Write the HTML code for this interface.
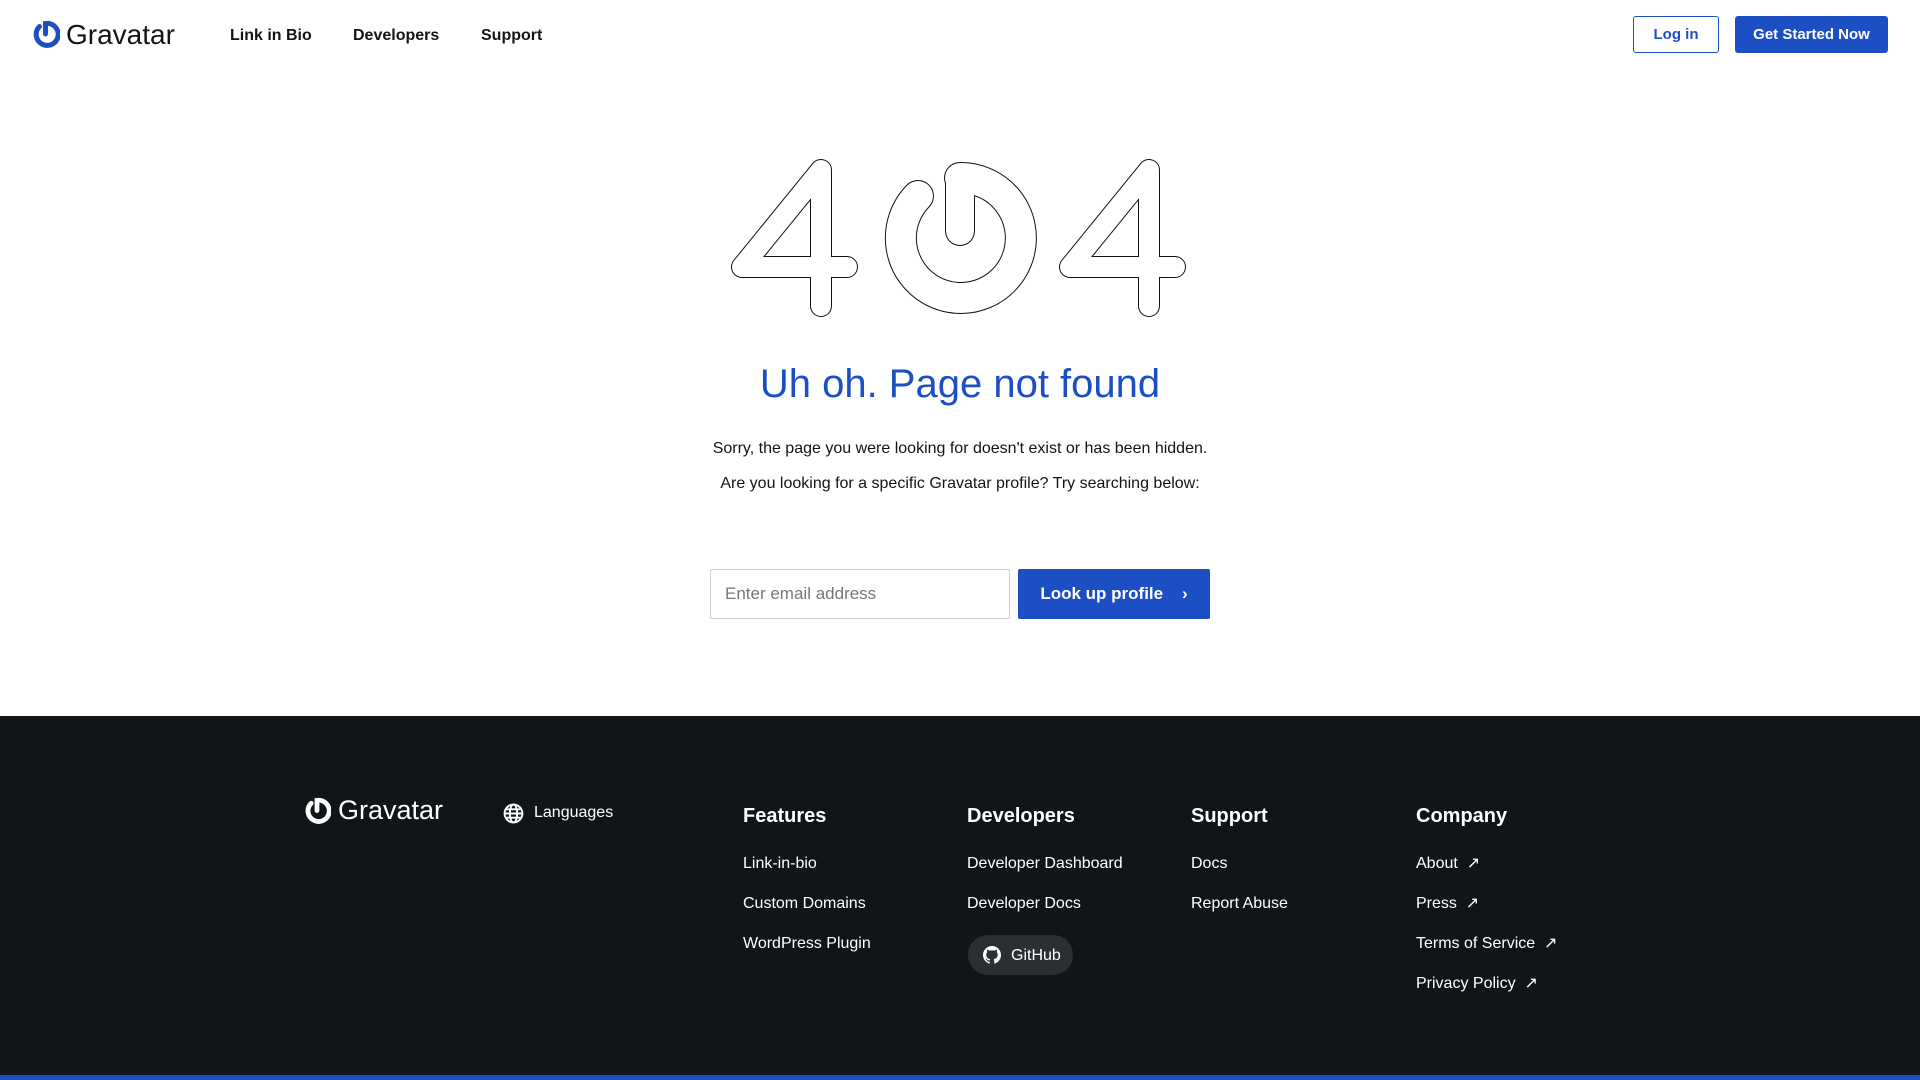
<!DOCTYPE html>
<html><head><meta charset="utf-8"><style>
*{margin:0;padding:0;box-sizing:border-box}
body{width:1920px;height:1080px;overflow:hidden;background:#fff;font-family:"Liberation Sans",Arial,sans-serif;color:#101517;position:relative}
.abs{position:absolute}
.nav{font-weight:bold;font-size:16px;top:27px}
.btn{position:absolute;top:16px;height:37px;border-radius:3px;font-size:15px;font-weight:bold;display:flex;align-items:center;justify-content:center}
footer{position:absolute;left:0;top:716px;width:1920px;height:364px;background:#101517;color:#fff}
footer .h{position:absolute;top:88px;font-size:20px;font-weight:bold}
footer .l{position:absolute;font-size:16px}
.bar{position:absolute;left:0;bottom:0;width:1920px;height:5px;background:#1d4fc4}
</style></head><body>
<svg class="abs" style="left:31px;top:20px" width="29" height="29" viewBox="0 0 29 29"><path d="M8.5 6.5 A11 11 0 1 0 14.5 3.5 V14" fill="none" stroke="#1d4fc4" stroke-width="5" stroke-linecap="round"/></svg>
<div class="abs" style="left:66px;top:19px;font-size:28px;color:#101517">Gravatar</div>
<div class="abs nav" style="left:230px">Link in Bio</div>
<div class="abs nav" style="left:353px">Developers</div>
<div class="abs nav" style="left:481px">Support</div>
<div class="btn" style="left:1633px;width:86px;border:1px solid #1d4fc4;color:#1d4fc4">Log in</div>
<div class="btn" style="left:1735px;width:153px;background:#1d4fc4;color:#fff">Get Started Now</div>

<svg class="abs" style="left:0;top:0" width="1920" height="400">
<g fill="none" stroke="#111" stroke-linecap="round" stroke-linejoin="round">
<path d="M821 306 V170 L742 267 H847" stroke-width="22"/>
<path d="M1149 306 V170 L1070 267 H1175" stroke-width="22"/>
<path d="M960 178 A60 60 0 1 1 918 196" stroke-width="32"/>
<path d="M960 178 V231" stroke-width="30"/>
</g>
<g fill="none" stroke="#fff" stroke-linecap="round" stroke-linejoin="round">
<path d="M821 306 V170 L742 267 H847" stroke-width="20"/>
<path d="M1149 306 V170 L1070 267 H1175" stroke-width="20"/>
<path d="M960 178 A60 60 0 1 1 918 196" stroke-width="30"/>
<path d="M960 178 V231" stroke-width="28"/>
</g>
</svg>

<div class="abs" style="left:0;width:1920px;top:362px;text-align:center;font-size:40px;color:#1d4fc4">Uh oh. Page not found</div>
<div class="abs" style="left:0;width:1920px;top:440px;text-align:center;font-size:16px">Sorry, the page you were looking for doesn't exist or has been hidden.</div>
<div class="abs" style="left:0;width:1920px;top:475px;text-align:center;font-size:16px">Are you looking for a specific Gravatar profile? Try searching below:</div>
<div class="abs" style="left:710px;top:569px;width:300px;height:50px;border:1px solid #ccc;border-radius:2px;font-size:17px;color:#777;padding:14px 14px">Enter email address</div>
<div class="abs" style="left:1018px;top:569px;width:192px;height:50px;background:#1d4fc4;color:#fff;border-radius:2px;font-size:17px;font-weight:bold;display:flex;align-items:center;justify-content:center">Look up profile&nbsp;&nbsp;&nbsp;&nbsp;›</div>

<footer>
<svg class="abs" style="left:303px;top:81px" width="28" height="28" viewBox="0 0 29 29"><path d="M8.5 6.5 A11 11 0 1 0 14.5 3.5 V14" fill="none" stroke="#fff" stroke-width="5" stroke-linecap="round"/></svg>
<div class="abs" style="left:338px;top:79px;font-size:27px">Gravatar</div>
<svg class="abs" style="left:503px;top:87px" width="21" height="21" viewBox="0 0 20 20" fill="none" stroke="#fff" stroke-width="1.8"><circle cx="10" cy="10" r="8.5"/><ellipse cx="10" cy="10" rx="3.5" ry="8.5"/><path d="M1.5 10H18.5M3 6H17M3 14H17"/></svg>
<div class="l" style="left:534px;top:88px">Languages</div>
<div class="h" style="left:743px;top:89px">Features</div>
<div class="h" style="left:967px;top:89px">Developers</div>
<div class="h" style="left:1191px;top:89px">Support</div>
<div class="h" style="left:1416px;top:89px">Company</div>
<div class="l" style="left:743px;top:139px">Link-in-bio</div>
<div class="l" style="left:743px;top:179px">Custom Domains</div>
<div class="l" style="left:743px;top:219px">WordPress Plugin</div>
<div class="l" style="left:967px;top:139px">Developer Dashboard</div>
<div class="l" style="left:967px;top:179px">Developer Docs</div>
<div class="abs" style="left:968px;top:219px;width:105px;height:40px;border-radius:20px;background:#2a2f33"></div>
<svg class="abs" style="left:983px;top:230px" width="18" height="18" viewBox="0 0 16 16"><path fill="#fff" d="M8 0C3.58 0 0 3.58 0 8c0 3.54 2.29 6.53 5.47 7.59.4.07.55-.17.55-.38v-1.33c-2.23.48-2.7-1.07-2.7-1.07-.36-.92-.89-1.17-.89-1.17-.73-.5.06-.49.06-.49.8.06 1.23.83 1.23.83.71 1.22 1.87.87 2.33.66.07-.52.28-.87.51-1.07-1.78-.2-3.64-.89-3.64-3.95 0-.87.31-1.59.82-2.15-.08-.2-.36-1.02.08-2.12 0 0 .67-.21 2.2.82A7.6 7.6 0 018 3.86c.68 0 1.36.09 2 .27 1.53-1.04 2.2-.82 2.2-.82.44 1.1.16 1.92.08 2.12.51.56.82 1.27.82 2.15 0 3.07-1.87 3.75-3.65 3.95.29.25.54.73.54 1.48v2.19c0 .21.15.46.55.38A8.01 8.01 0 0016 8c0-4.420-3.58-8-8-8z"/></svg>
<div class="l" style="left:1011px;top:231px">GitHub</div>
<div class="l" style="left:1191px;top:139px">Docs</div>
<div class="l" style="left:1191px;top:179px">Report Abuse</div>
<div class="l" style="left:1416px;top:137px">About&nbsp;&nbsp;↗</div>
<div class="l" style="left:1416px;top:177px">Press&nbsp;&nbsp;↗</div>
<div class="l" style="left:1416px;top:217px">Terms of Service&nbsp;&nbsp;↗</div>
<div class="l" style="left:1416px;top:257px">Privacy Policy&nbsp;&nbsp;↗</div>
<div class="bar"></div>
</footer>
</body></html>
